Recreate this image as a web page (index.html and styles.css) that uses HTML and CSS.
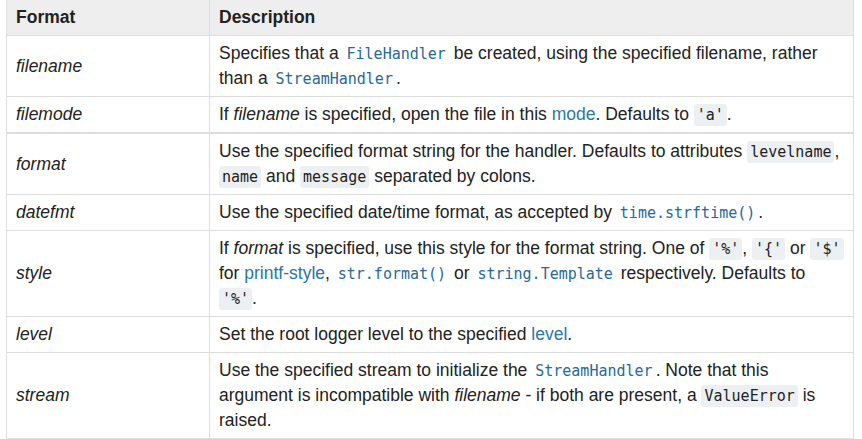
FILE: index.html
```html
<!DOCTYPE html>
<html>
<head>
<meta charset="utf-8">
<link rel="stylesheet" href="styles.css">
</head>
<body>
<table class="opts">
  <colgroup><col class="c1"><col class="c2"></colgroup>
  <thead>
    <tr><th>Format</th><th>Description</th></tr>
  </thead>
  <tbody>
    <tr>
      <td><em>filename</em></td>
      <td>Specifies that a <a class="xref"><code>FileHandler</code></a> be created, using the specified filename, rather than a <a class="xref"><code>StreamHandler</code></a>.</td>
    </tr>
    <tr>
      <td><em>filemode</em></td>
      <td>If <em>filename</em> is specified, open the file in this <a>mode</a>. Defaults to <code class="lit">'a'</code>.</td>
    </tr>
    <tr class="split">
      <td><em>format</em></td>
      <td>Use the specified format string for the handler. Defaults to attributes <code class="lit">levelname</code>, <code class="lit">name</code> and <code class="lit">message</code> separated by colons.</td>
    </tr>
    <tr>
      <td><em>datefmt</em></td>
      <td>Use the specified date/time format, as accepted by <a class="xref"><code>time.strftime()</code></a>.</td>
    </tr>
    <tr>
      <td><em>style</em></td>
      <td>If <em>format</em> is specified, use this style for the format string. One of <code class="lit">'%'</code>, <code class="lit">'{'</code> or <code class="lit">'$'</code> for <a>printf-style</a>, <a class="xref"><code>str.format()</code></a> or <a class="xref"><code>string.Template</code></a> respectively. Defaults to <code class="lit">'%'</code>.</td>
    </tr>
    <tr>
      <td><em>level</em></td>
      <td>Set the root logger level to the specified <a>level</a>.</td>
    </tr>
    <tr>
      <td><em>stream</em></td>
      <td>Use the specified stream to initialize the <a class="xref"><code>StreamHandler</code></a>. Note that this argument is incompatible with <em>filename</em> - if both are present, a <code class="lit">ValueError</code> is raised.</td>
    </tr>
  </tbody>
</table>
</body>
</html>
```
FILE: styles.css
```css
html, body {
  margin: 0;
  padding: 0;
  background: #fff;
}
body {
  font-family: "Liberation Sans", Arial, sans-serif;
  font-size: 17.5px;
  line-height: 25px;
  color: #222;
}
.opts {
  border-collapse: collapse;
  table-layout: fixed;
  width: 847px;
  margin: -1px 0 0 6px;
  border: 1px solid #ddd;
}
.c1 { width: 203px; }
.c2 { width: 644px; }
.opts th, .opts td {
  border: 1px solid #ddd;
  padding: 5px 8px 5px 9px;
  text-align: left;
  vertical-align: middle;
}
.opts th {
  background: #eee;
  font-weight: bold;
}
.opts tr.split td {
  border-top: 2px solid #ddd;
}
a {
  color: #2a76ac;
  text-decoration: none;
}
code {
  font-family: "DejaVu Sans Mono", monospace;
  font-size: 15px;
  line-height: 1;
  padding: 2px 3px;
  border-radius: 3px;
}
code.lit {
  background: #ecf0f3;
  color: #222;
}
a.xref code {
  color: #27689a;
  background: none;
}
```
